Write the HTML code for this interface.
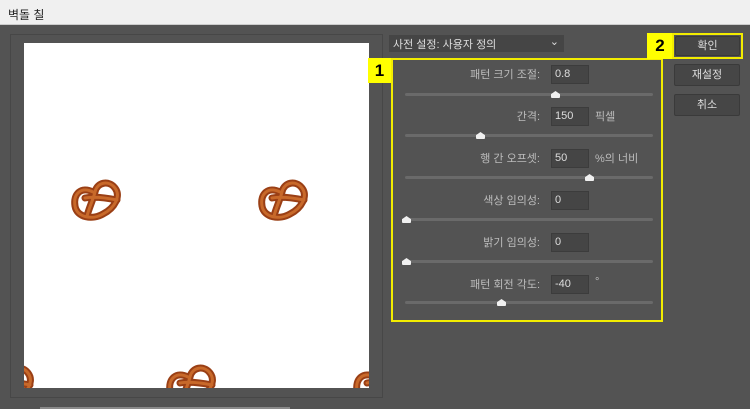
<!DOCTYPE html>
<html><head><meta charset="utf-8"><style>
*{margin:0;padding:0;box-sizing:border-box}
body{width:750px;height:409px;background:#535353;font-family:"Liberation Sans","Noto Sans CJK KR",sans-serif;position:relative;overflow:hidden;font-size:11px;color:#bcbcbc}
.abs{position:absolute}
.title{left:0;top:0;width:750px;height:25px;background:#f0f0f0;border-bottom:1px solid #ccc;color:#222;font-size:12px;padding:6px 8px}
.frame{left:10px;top:34px;width:373px;height:364px;border:1px solid #474747}
.prev{left:24px;top:43px;width:345px;height:345px;background:#fff;overflow:hidden}
.lbl{right:210px;text-align:right;font-size:11px;color:#bcbcbc}
.inp{left:551px;width:38px;height:19px;background:#454545;border:1px solid #3c3c3c;color:#ddd;padding:2px 3px;font-size:11px}
.trk{left:405px;width:248px;height:3px;background:#6a6a6a;border-radius:2px}
.th{width:9px;height:7px;background:#f0f0f0;clip-path:polygon(50% 0,100% 45%,100% 100%,0 100%,0 45%);border-radius:1px}
.btn{background:#464646;border:1px solid #3a3a3a;color:#ddd;text-align:center;font-size:11px;border-radius:2px}
.badge{background:#ffff00;color:#000;font-weight:bold;font-size:17px;text-align:center}
</style></head><body>
<svg width="0" height="0" style="position:absolute"><defs><g id="p"><path d="M22 14 C10 8 2 16 4 28 C6 40 22 42 32 36 C44 30 50 18 44 10 C38 2 26 4 24 14 C22 22 18 30 16 38 M14 20 C24 18 36 20 46 22" fill="none" stroke="#9a3f15" stroke-width="7" stroke-linecap="round"/><path d="M22 14 C10 8 2 16 4 28 C6 40 22 42 32 36 C44 30 50 18 44 10 C38 2 26 4 24 14 C22 22 18 30 16 38 M14 20 C24 18 36 20 46 22" fill="none" stroke="#c8692a" stroke-width="3" stroke-linecap="round"/></g></defs></svg>
<div class="abs title">벽돌 칠</div>
<div class="abs frame"></div>
<div class="abs prev">
<svg width="345" height="345" style="position:absolute;left:0;top:0">
<use href="#p" x="47" y="135"/><use href="#p" x="234" y="135"/><use href="#p" x="142" y="320"/><use href="#p" x="-40" y="320"/><use href="#p" x="329" y="320"/>
</svg></div>
<div class="abs" style="left:389px;top:35px;width:175px;height:17px;background:#454545;color:#ddd;font-size:11px;padding:1px 4px">사전 설정: 사용자 정의<span style="position:absolute;right:5px;top:0">⌄</span></div>
<div class="abs" style="left:391px;top:58px;width:272px;height:264px;border:2px solid #f2ec00"></div>
<div class="abs badge" style="left:368px;top:58px;width:23px;height:25px;line-height:25px">1</div>
<div class="abs badge" style="left:647px;top:33px;width:26px;height:26px;line-height:26px">2</div>
<div class="abs" style="left:672px;top:33px;width:71px;height:26px;border:2px solid #f2ec00"></div>
<div class="abs btn" style="left:675px;top:36px;width:65px;height:20px;line-height:18px">확인</div>
<div class="abs btn" style="left:674px;top:64px;width:66px;height:22px;line-height:20px">재설정</div>
<div class="abs btn" style="left:674px;top:94px;width:66px;height:22px;line-height:20px">취소</div>

<div class="abs lbl" style="top:66px">패턴 크기 조절:</div><div class="abs inp" style="top:65px">0.8</div>
<div class="abs trk" style="top:93px"></div><div class="abs th" style="left:551px;top:91px"></div>
<div class="abs lbl" style="top:108px">간격:</div><div class="abs inp" style="top:107px">150</div><div class="abs" style="left:595px;top:108px">픽셀</div>
<div class="abs trk" style="top:134px"></div><div class="abs th" style="left:476px;top:132px"></div>
<div class="abs lbl" style="top:150px">행 간 오프셋:</div><div class="abs inp" style="top:149px">50</div><div class="abs" style="left:595px;top:150px">%의 너비</div>
<div class="abs trk" style="top:176px"></div><div class="abs th" style="left:585px;top:174px"></div>
<div class="abs lbl" style="top:192px">색상 임의성:</div><div class="abs inp" style="top:191px">0</div>
<div class="abs trk" style="top:218px"></div><div class="abs th" style="left:402px;top:216px"></div>
<div class="abs lbl" style="top:234px">밝기 임의성:</div><div class="abs inp" style="top:233px">0</div>
<div class="abs trk" style="top:260px"></div><div class="abs th" style="left:402px;top:258px"></div>
<div class="abs lbl" style="top:276px">패턴 회전 각도:</div><div class="abs inp" style="top:275px">-40</div><div class="abs" style="left:595px;top:276px">°</div>
<div class="abs trk" style="top:301px"></div><div class="abs th" style="left:497px;top:299px"></div>
<div class="abs" style="left:40px;top:407px;width:250px;height:2px;background:#8a8a8a"></div>
</body></html>
